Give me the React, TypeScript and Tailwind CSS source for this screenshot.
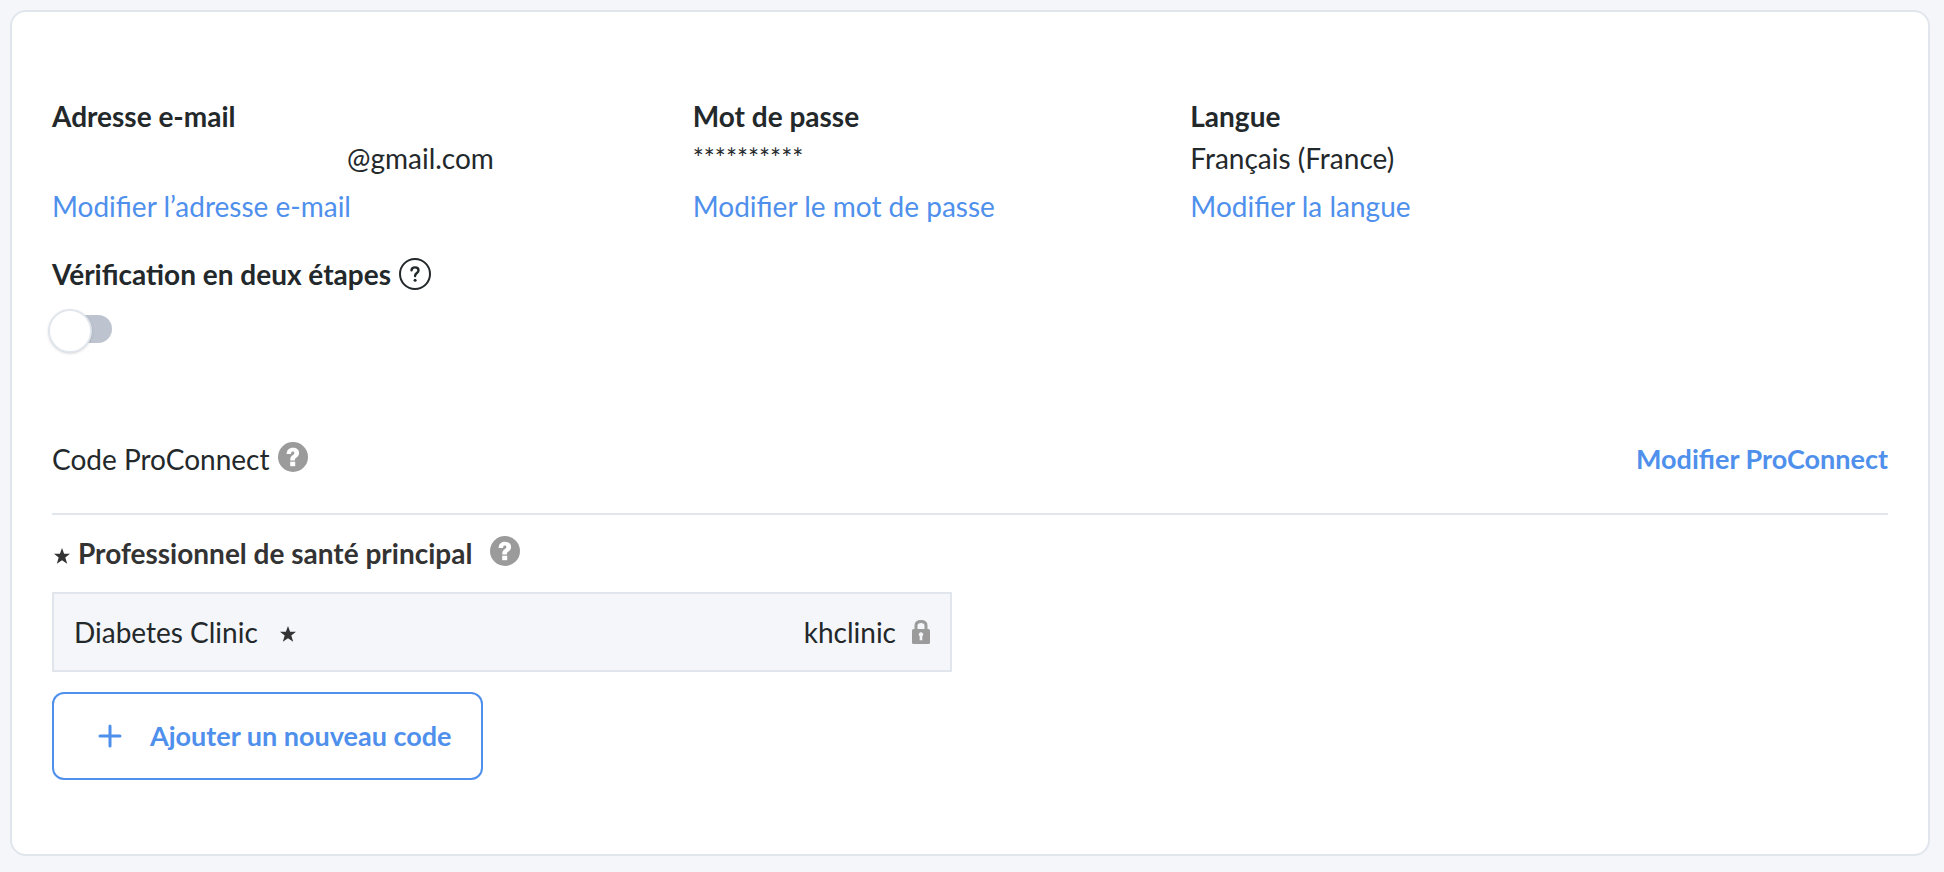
import { useState } from 'react';

type Column = {
    title: string;
    value: string;
    link: string;
    valueClass?: string;
};

const columns: Column[] = [
    { title: 'Adresse e-mail', value: '@gmail.com', link: 'Modifier l’adresse e-mail', valueClass: 'pl-[295px]' },
    { title: 'Mot de passe', value: '**********', link: 'Modifier le mot de passe', valueClass: 'text-[26px] leading-[42px]' },
    { title: 'Langue', value: 'Français (France)', link: 'Modifier la langue' },
];

function HelpOutlineIcon() {
    return (
        <svg viewBox="0 0 32 32" className="size-8" fill="none" aria-hidden="true">
            <circle cx="16" cy="16" r="15" stroke="currentColor" strokeWidth="2" />
            <path
                d="M12.5 12.4c.1-1.900 1.500-3 3.500-3s3.500 1.200 3.500 3c0 2.600-3.400 2.600-3.400 5.300v.4"
                stroke="currentColor"
                strokeWidth="2.400"
                strokeLinecap="round"
                strokeLinejoin="round"
            />
            <circle cx="16.100" cy="22.200" r="1.500" fill="currentColor" />
        </svg>
    );
}

function HelpIcon() {
    return (
        <svg viewBox="0 0 30 30" className="size-[30px]" fill="none" aria-hidden="true">
            <circle cx="15" cy="15" r="15" fill="#9b9b9b" />
            <path
                d="M8.600 12.100c0-3.900 2.500-6.300 6.300-6.300 3.700 0 6.200 2 6.200 5.100 0 2.400-1.300 3.600-2.600 4.600-1.100.8-1.600 1.300-1.600 2.400v.5h-4.600v-1c0-2 .9-3.200 2.300-4.200 1-.8 1.700-1.200 1.700-2.200 0-.9-.6-1.400-1.500-1.400-1 0-1.700.8-1.800 2.500z"
                fill="#fff"
            />
            <rect x="12.200" y="19.700" width="5" height="4.500" fill="#fff" />
        </svg>
    );
}

function StarIcon() {
    return (
        <svg viewBox="0 0 16 16" className="size-4" fill="#333" aria-hidden="true">
            <path d="M8 0l2.100 5.700H16l-4.700 3.800 1.900 6.300L8 12.200l-5.200 3.600 1.900-6.300L0 5.700h5.900z" />
        </svg>
    );
}

function LockIcon() {
    return (
        <svg viewBox="0 0 18 24" className="h-6 w-[18px]" fill="none" aria-hidden="true">
            <path d="M4 10V5.500C4 2.800 5.800 1.500 9 1.500s5 1.300 5 4V10" stroke="#9b9b9b" strokeWidth="3" />
            <rect y="9" width="18" height="15" rx="1.500" fill="#9b9b9b" />
            <path d="M9 12.300a2.200 2.200 0 0 0-1.300 4v3.900h2.600v-3.900A2.200 2.200 0 0 0 9 12.300z" fill="#f4f6fa" />
        </svg>
    );
}

function PlusIcon() {
    return (
        <svg viewBox="0 0 24 24" className="size-6" fill="none" aria-hidden="true">
            <path d="M12 2v20M2 12h20" stroke="currentColor" strokeWidth="3" strokeLinecap="round" />
        </svg>
    );
}

export default function App() {
    const [twoStep, setTwoStep] = useState(false);

    return (
        <div className="min-h-screen bg-[#f4f6fa] pt-[10px] pr-[14px] pb-4 pl-[10px] font-['Lato',sans-serif] text-[28px] leading-[42px] text-[#23282b]">
            <main className="rounded-2xl border-2 border-[#e1e6ed] bg-white px-10 pt-[83px] pb-[74px]">
                {/* Account details */}
                <section className="grid grid-cols-[349fr_271fr_380fr]">
                    {columns.map((column) => (
                        <div key={column.title}>
                            <h2 className="font-bold">{column.title}</h2>
                            <p className={column.valueClass}>{column.value}</p>
                            <a href="#" className="mt-1.5 block w-fit text-[#4f90ec] hover:underline">
                                {column.link}
                            </a>
                        </div>
                    ))}
                </section>

                {/* Two-step verification */}
                <section className="mt-[26px]">
                    <div className="flex items-center gap-2">
                        <label htmlFor="two-step" className="font-bold">
                            Vérification en deux étapes
                        </label>
                        <button type="button" aria-label="Aide sur la vérification">
                            <HelpOutlineIcon />
                        </button>
                    </div>
                    <div className="relative mt-5 h-7 w-[60px]">
                        <input
                            id="two-step"
                            type="checkbox"
                            role="switch"
                            checked={twoStep}
                            onChange={(e) => setTwoStep(e.target.checked)}
                            className="peer absolute inset-0 z-10 cursor-pointer opacity-0"
                        />
                        <span className="block h-7 rounded-full bg-[#bdc4cf] peer-checked:bg-[#4f90ec]" />
                        <span className="absolute -top-1.5 -left-1 size-11 rounded-full border-2 border-[#e1e6ed] bg-white shadow-sm transition-transform peer-checked:translate-x-6" />
                    </div>
                </section>

                {/* ProConnect code */}
                <section className="mt-[95px]">
                    <div className="flex items-center justify-between border-b-2 border-[#e1e6ed] pb-[33px]">
                        <div className="flex items-center gap-2">
                            <h2>Code ProConnect</h2>
                            <button type="button" aria-label="Aide sur le code ProConnect" className="pb-1">
                                <HelpIcon />
                            </button>
                        </div>
                        <a href="#" className="text-[27px] leading-[42px] font-bold text-[#4f90ec] hover:underline">
                            Modifier ProConnect
                        </a>
                    </div>

                    <div className="mt-[17px] flex items-center">
                        <span className="mr-2 ml-0.5 pt-1.5">
                            <StarIcon />
                        </span>
                        <h3 className="font-bold text-[#333]">Professionnel de santé principal</h3>
                        <button type="button" aria-label="Aide sur le professionnel principal" className="ml-[18px] pb-1">
                            <HelpIcon />
                        </button>
                    </div>

                    <div className="mt-[18px] flex h-20 w-full max-w-[900px] items-center border-2 border-[#e1e6ed] bg-[#f4f6fa] px-5">
                        <span>Diabetes Clinic</span>
                        <span className="ml-[22px] pt-1">
                            <StarIcon />
                        </span>
                        <span className="ml-auto">khclinic</span>
                        <span className="ml-4">
                            <LockIcon />
                        </span>
                    </div>

                    <button
                        type="button"
                        className="mt-5 flex h-[88px] items-center rounded-xl border-2 border-[#4f90ec] pr-[30px] pl-11 text-[27px] leading-[42px] font-bold text-[#4f90ec] hover:bg-[#f4f6fa]"
                    >
                        <PlusIcon />
                        <span className="ml-7">Ajouter un nouveau code</span>
                    </button>
                </section>
            </main>
        </div>
    );
}
